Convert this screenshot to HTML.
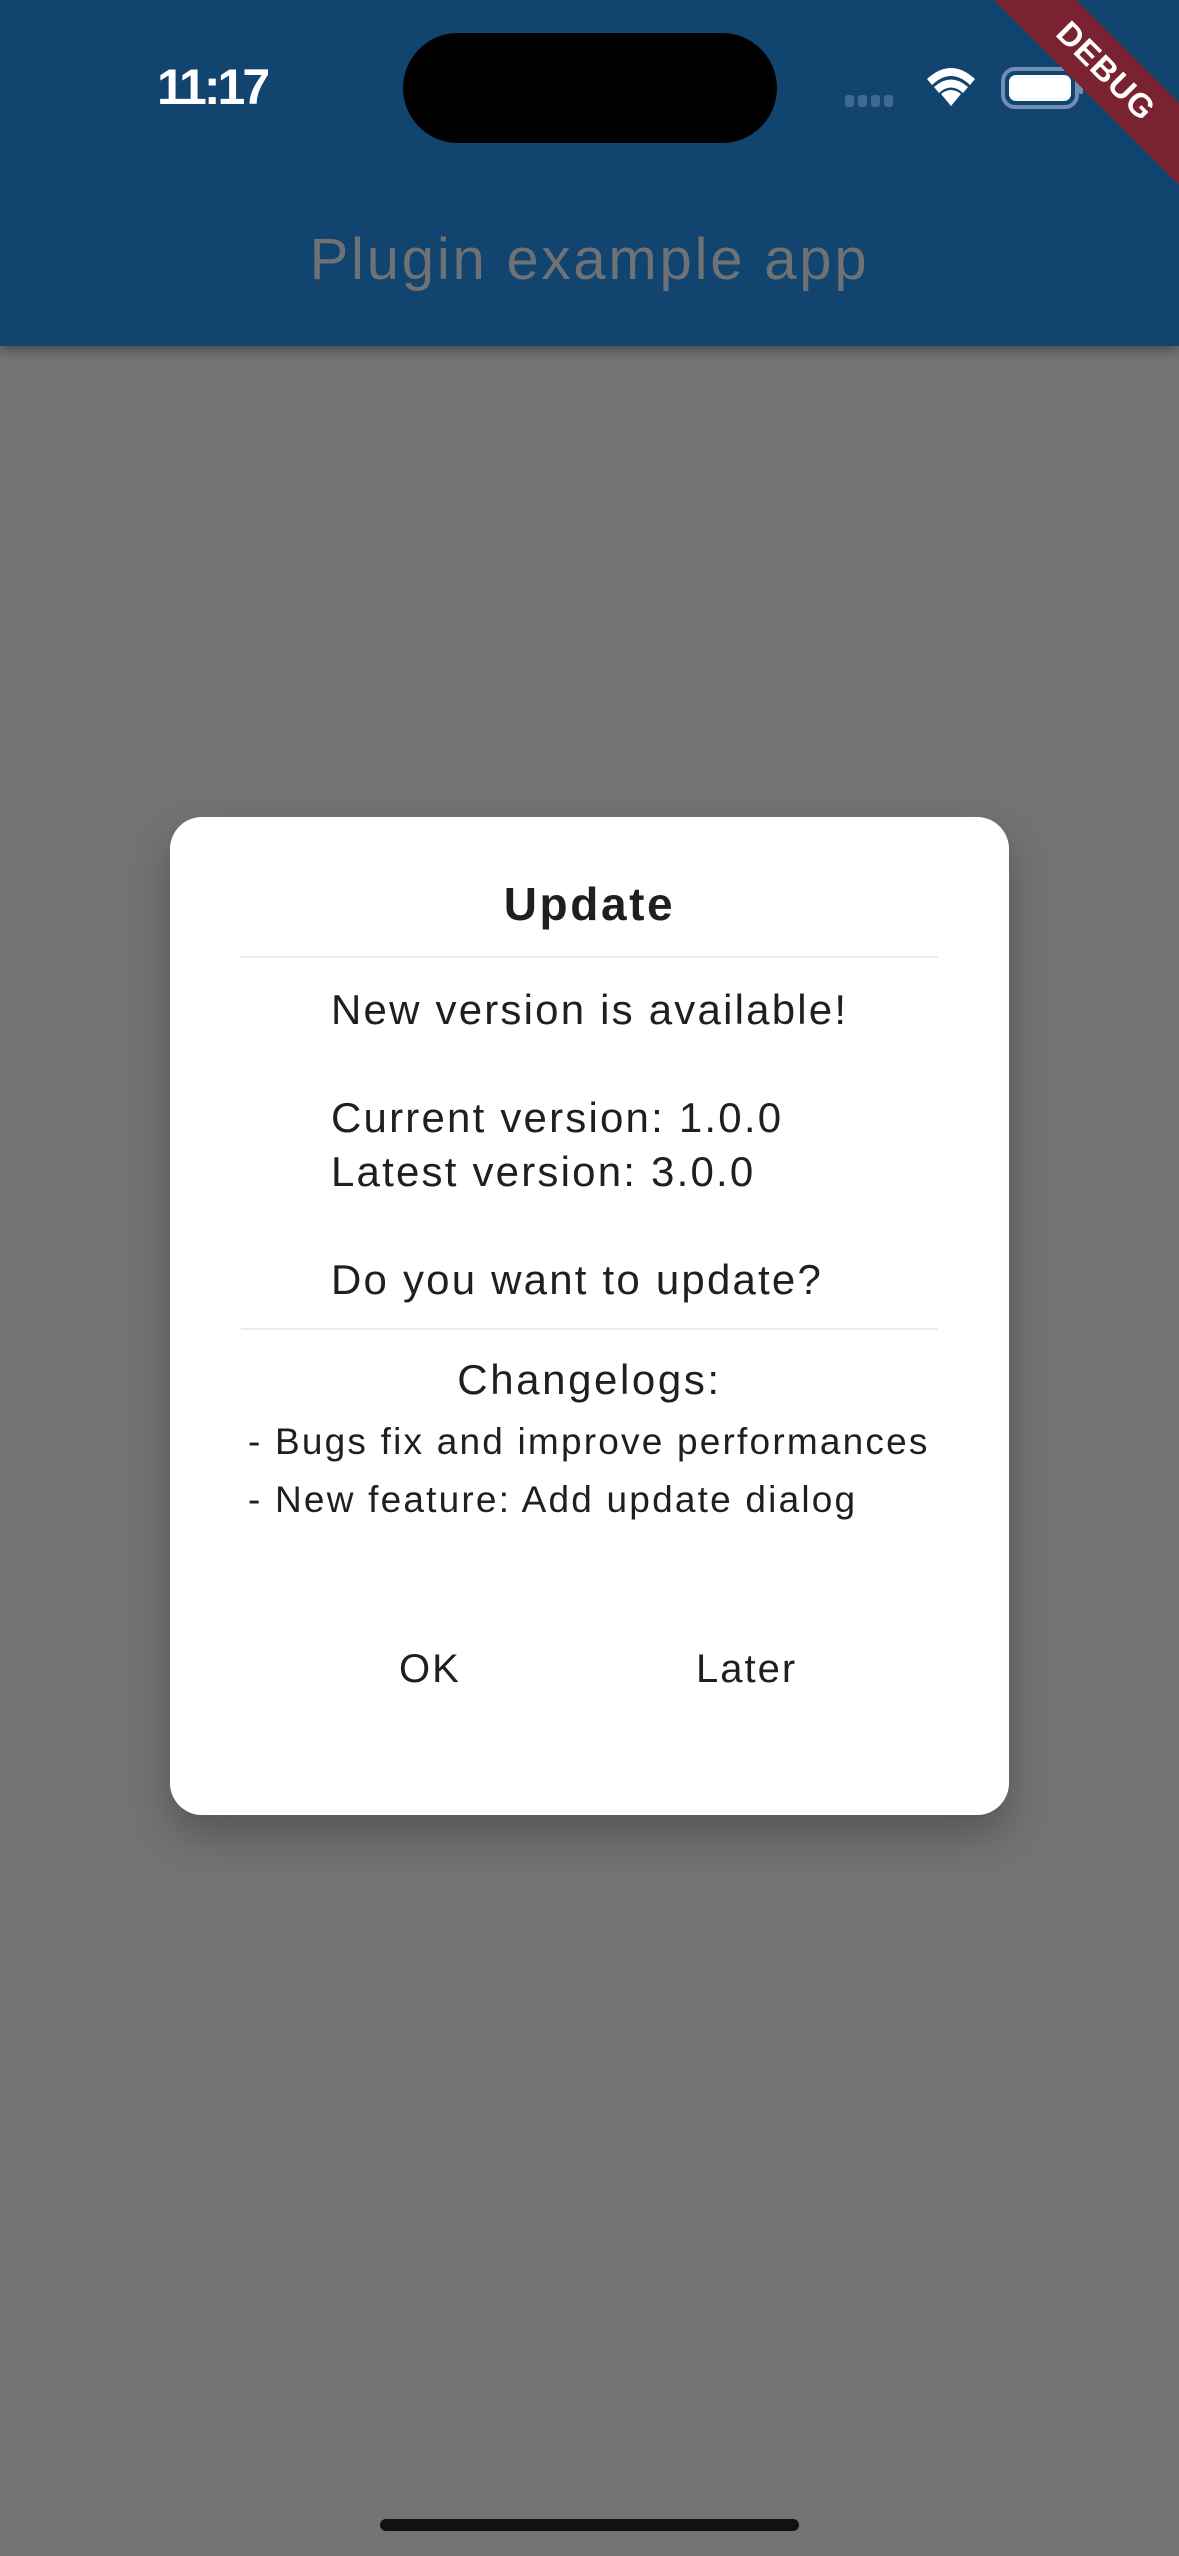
<!DOCTYPE html>
<html><head><meta charset="utf-8"><style>
*{margin:0;padding:0;box-sizing:border-box}
body{width:1179px;height:2556px;background:#737373;position:relative;overflow:hidden;font-family:"Liberation Sans",sans-serif;color:#1f1f1f}
.bar{position:absolute;left:0;top:0;width:1179px;height:346px;background:#11446f;box-shadow:0 4px 10px rgba(0,0,0,.35)}
.time{position:absolute;left:157px;top:58px;font-size:50px;font-weight:bold;color:#fff;letter-spacing:-3px}
.island{position:absolute;left:403px;top:33px;width:374px;height:110px;background:#000;border-radius:55px}
.title{position:absolute;left:0;width:1179px;top:226px;text-align:center;font-size:58px;color:#6f7275;letter-spacing:2.8px}
.banner{position:absolute;right:-92px;top:42px;width:330px;height:58px;background:#7a2230;transform:rotate(45deg);color:#fff;font-weight:bold;font-size:33px;text-align:center;line-height:58px;letter-spacing:1px}
.dlg{position:absolute;left:170px;top:817px;width:839px;height:998px;background:#fff;border-radius:32px;box-shadow:0 20px 40px rgba(0,0,0,.25)}
.t{position:absolute;white-space:nowrap}
.hr{position:absolute;left:71px;width:697px;height:2px;background:#ececec}
.home{position:absolute;left:380px;top:2519px;width:419px;height:12px;border-radius:6px;background:#111}
</style></head><body>
<div class="bar">
<div class="time">11:17</div>
<div class="island"></div>
<svg style="position:absolute;left:843px;top:62px" width="240" height="50" viewBox="0 0 240 50">
<g fill="#3f6a90"><rect x="2" y="33" width="9" height="12" rx="3"/><rect x="15" y="33" width="9" height="12" rx="3"/><rect x="28" y="33" width="9" height="12" rx="3"/><rect x="41" y="33" width="9" height="12" rx="3"/></g>
<g fill="#fff" transform="translate(108 0)"><path d="M0 44 L-10 32 Q0 24 10 32 Z"/><path d="M-17 25 Q0 10 17 25 L12 31 Q0 20 -12 31 Z"/><path d="M-24 17 Q0 -5 24 17 L19 23 Q0 5 -19 23 Z"/></g>
<rect x="160" y="7" width="74" height="38" rx="12" fill="none" stroke="#6f90b0" stroke-width="4"/>
<rect x="166" y="13" width="62" height="26" rx="7" fill="#fff"/>
<rect x="236" y="20" width="4" height="12" rx="2" fill="#6f90b0"/>
</svg>
<div class="title">Plugin example app</div>
</div>
<div class="banner">DEBUG</div>
<div class="dlg">
<div class="t" style="left:0;width:839px;text-align:center;top:60px;font-size:46px;font-weight:bold;letter-spacing:2.6px">Update</div>
<div class="hr" style="top:139px"></div>
<div class="t" style="left:161px;top:166px;font-size:42px;line-height:54px;letter-spacing:2.2px">New version is available!<br><br>Current version: 1.0.0<br>Latest version: 3.0.0<br><br>Do you want to update?</div>
<div class="hr" style="top:511px"></div>
<div class="t" style="left:0;width:839px;text-align:center;top:539px;font-size:42px;letter-spacing:2.6px">Changelogs:</div>
<div class="t" style="left:78px;top:604px;font-size:37px;letter-spacing:2.2px">- Bugs fix and improve performances</div>
<div class="t" style="left:78px;top:662px;font-size:37px;letter-spacing:2.2px">- New feature: Add update dialog</div>
<div class="t" style="left:229px;top:830px;font-size:40px;letter-spacing:2px">OK</div>
<div class="t" style="left:526px;top:830px;font-size:40px;letter-spacing:2px">Later</div>
</div>
<div class="home"></div>
</body></html>
